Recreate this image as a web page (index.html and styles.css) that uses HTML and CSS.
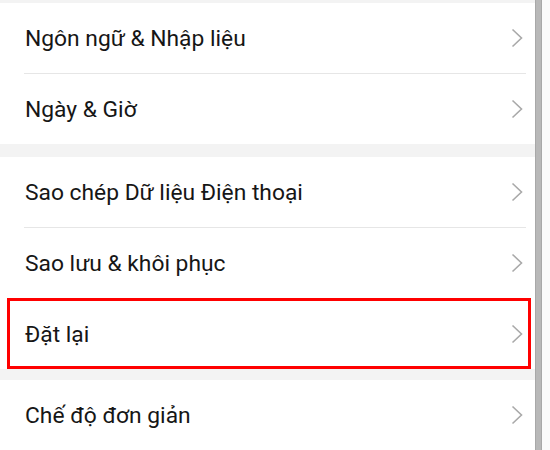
FILE: index.html
```html
<!DOCTYPE html>
<html lang="vi">
<head>
  <meta charset="UTF-8">
  <meta name="viewport" content="width=device-width, initial-scale=1.0">
  <title>Cài đặt</title>
  <link rel="stylesheet" href="styles.css">
</head>
<body>
  <div class="screen">
    <div class="settings">
      <div class="gap gap-top"></div>
      <div class="group">
        <div class="item">
          <span class="label">Ngôn ngữ &amp; Nhập liệu</span>
          <svg class="chevron" viewBox="0 0 12 20"><polyline points="1.5,1.5 10.5,10 1.5,18.5"/></svg>
        </div>
        <div class="item">
          <span class="label">Ngày &amp; Giờ</span>
          <svg class="chevron" viewBox="0 0 12 20"><polyline points="1.5,1.5 10.5,10 1.5,18.5"/></svg>
        </div>
      </div>
      <div class="gap"></div>
      <div class="group">
        <div class="item">
          <span class="label">Sao chép Dữ liệu Điện thoại</span>
          <svg class="chevron" viewBox="0 0 12 20"><polyline points="1.5,1.5 10.5,10 1.5,18.5"/></svg>
        </div>
        <div class="item">
          <span class="label">Sao lưu &amp; khôi phục</span>
          <svg class="chevron" viewBox="0 0 12 20"><polyline points="1.5,1.5 10.5,10 1.5,18.5"/></svg>
        </div>
        <div class="item marked">
          <span class="label">Đặt lại</span>
          <svg class="chevron" viewBox="0 0 12 20"><polyline points="1.5,1.5 10.5,10 1.5,18.5"/></svg>
        </div>
      </div>
      <div class="gap gap-small"></div>
      <div class="group">
        <div class="item item-end">
          <span class="label">Chế độ đơn giản</span>
          <svg class="chevron" viewBox="0 0 12 20"><polyline points="1.5,1.5 10.5,10 1.5,18.5"/></svg>
        </div>
      </div>
    </div>
    <div class="scrollbar"></div>
    <div class="edge"></div>
  </div>
</body>
</html>
```

FILE: styles.css
```css
html,
body {
  margin: 0;
  padding: 0;
  background: #fff;
}
body {
  font-family: Roboto, "Noto Sans", sans-serif;
  color: #161616;
}
.screen {
  display: flex;
  width: 550px;
  height: 450px;
  overflow: hidden;
}
.settings {
  flex: 0 0 535px;
  width: 535px;
}
.scrollbar {
  flex: 0 0 7px;
  width: 7px;
  height: 450px;
  background: #b8b8b8;
  border-left: 1px solid #a8a8a8;
  border-right: 1px solid #a8a8a8;
  box-sizing: border-box;
}
.edge {
  flex: 1;
  background: #fafafa;
}
.gap {
  height: 13px;
  background: #f3f3f3;
}
.gap-top {
  height: 3px;
}
.gap-small {
  height: 11px;
}
.group {
  background: #fff;
  padding-right: 9px;
}
.item {
  position: relative;
  display: flex;
  align-items: center;
  justify-content: space-between;
  height: 70px;
  margin-left: 24px;
  padding-right: 3px;
  border-bottom: 1px solid #e6e6e6;
}
.group .item:last-child {
  border-bottom: none;
}
.group .item-end:last-child {
  border-bottom: 2px solid #ececec;
}
.label {
  font-size: 22.8px;
  padding-left: 1px;
}
.chevron {
  width: 12px;
  height: 20px;
  fill: none;
  stroke: #a9a9a9;
  stroke-width: 1.6;
}
.marked::after {
  content: "";
  position: absolute;
  left: -17px;
  right: -5px;
  top: -1px;
  bottom: 0;
  border: 3px solid #f00;
}
```
